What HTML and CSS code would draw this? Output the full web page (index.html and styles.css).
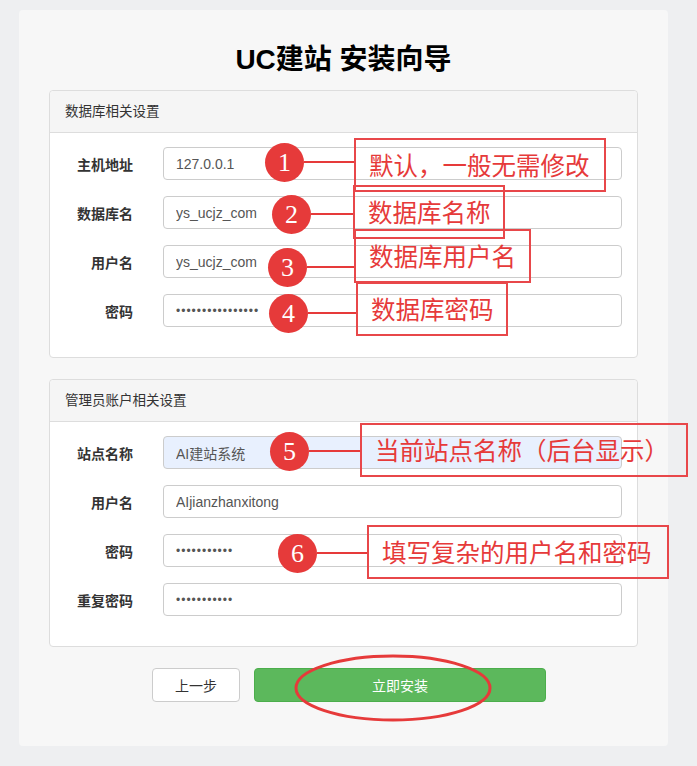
FILE: index.html
```html
<!DOCTYPE html>
<html lang="zh-CN">

<head>
    <meta charset="UTF-8">
    <meta name="viewport" content="width=device-width, initial-scale=1.0">
    <title>UC建站 安装向导</title>
    <link rel="stylesheet" href="styles.css">
</head>

<body>

    <div class="install-box">
        <h1>UC建站 安装向导</h1>

        <div class="panel">
            <div class="panel-heading">数据库相关设置</div>
            <div class="panel-body">
                <label>主机地址</label>
                <input type="text" value="127.0.0.1">
                <label>数据库名</label>
                <input type="text" value="ys_ucjz_com">
                <label>用户名</label>
                <input type="text" value="ys_ucjz_com">
                <label>密码</label>
                <input type="password" value="1234567890123456">
            </div>
        </div>

        <div class="panel">
            <div class="panel-heading">管理员账户相关设置</div>
            <div class="panel-body">
                <label>站点名称</label>
                <input type="text" class="autofill" value="AI建站系统">
                <label>用户名</label>
                <input type="text" value="AIjianzhanxitong">
                <label>密码</label>
                <input type="password" value="12345678901">
                <label>重复密码</label>
                <input type="password" value="12345678901">
            </div>
        </div>

        <div class="actions">
            <button class="btn btn-default">上一步</button>
            <button class="btn btn-success">立即安装</button>
        </div>
    </div>

    <!-- annotations drawn over the screenshot -->
    <div class="note n1">
        <span class="pin">1</span><span class="line"></span>
        <div class="tip">默认，一般无需修改</div>
    </div>
    <div class="note n2">
        <span class="pin">2</span><span class="line"></span>
        <div class="tip">数据库名称</div>
    </div>
    <div class="note n3">
        <span class="pin">3</span><span class="line"></span>
        <div class="tip">数据库用户名</div>
    </div>
    <div class="note n4">
        <span class="pin">4</span><span class="line"></span>
        <div class="tip">数据库密码</div>
    </div>
    <div class="note n5">
        <span class="pin">5</span><span class="line"></span>
        <div class="tip">当前站点名称（后台显示）</div>
    </div>
    <div class="note n6">
        <span class="pin">6</span><span class="line"></span>
        <div class="tip">填写复杂的用户名和密码</div>
    </div>

    <svg class="ring" width="204" height="72" viewBox="0 0 204 72">
        <ellipse cx="102" cy="36" rx="97" ry="32" fill="none" stroke="#e63a3a" stroke-width="3" />
    </svg>

</body>

</html>
```

FILE: styles.css
```css
body {
    margin: 0;
    background-color: #eeeff1;
    font-family: "Liberation Sans", Arial, "Noto Sans CJK SC", sans-serif;
    color: #333;
    height: 766px;
    overflow: hidden;
}

.install-box {
    width: 589px;
    margin: 10px 0 0 19px;
    padding: 30px 30px 44px;
    background: #f7f7f7;
    border-radius: 4px;
}

.install-box h1 {
    margin: 0 0 10px;
    font-size: 28px;
    line-height: 40px;
    text-align: center;
    color: #000;
}

.panel {
    background: #fff;
    border: 1px solid #ddd;
    border-radius: 4px;
    margin-bottom: 21px;
}

.panel-heading {
    height: 41px;
    line-height: 41px;
    padding: 0 15px;
    font-size: 13.5px;
    color: #333;
    background: #f5f5f5;
    border-bottom: 1px solid #ddd;
    border-radius: 4px 4px 0 0;
}

.panel-body {
    display: grid;
    grid-template-columns: 68px 1fr;
    column-gap: 30px;
    row-gap: 16px;
    align-items: center;
    padding: 14px 15px 30px;
}

.panel-body label {
    font-size: 14px;
    font-weight: bold;
    text-align: right;
    color: #333;
}

.panel-body input {
    box-sizing: border-box;
    height: 33px;
    padding: 0 12px;
    font-family: "Liberation Sans", Arial, "Noto Sans CJK SC", sans-serif;
    font-size: 14px;
    color: #555;
    background: #fff;
    border: 1px solid #ccc;
    border-radius: 4px;
    outline: none;
}

.panel-body input[type="password"] {
    font-size: 12px;
    letter-spacing: 1px;
}

.panel-body input.autofill {
    background: #e8f0fe;
}

.actions {
    display: flex;
    gap: 14px;
    padding-left: 103px;
}

.btn {
    height: 34px;
    font-family: "Liberation Sans", Arial, "Noto Sans CJK SC", sans-serif;
    font-size: 14px;
    border-radius: 4px;
    cursor: pointer;
}

.btn-default {
    width: 88px;
    background: #fff;
    border: 1px solid #ccc;
    color: #333;
}

.btn-success {
    width: 292px;
    background: #5cb85c;
    border: 1px solid #4cae4c;
    color: #fff;
}

/* annotations */
.note {
    position: absolute;
    display: flex;
    align-items: center;
}

.pin {
    position: relative;
    width: 39px;
    height: 39px;
    border-radius: 50%;
    background: #e63a3a;
    color: #fff;
    font-family: "Liberation Serif", "Times New Roman", serif;
    font-size: 26px;
    line-height: 39px;
    text-align: center;
    flex-shrink: 0;
}

.line {
    position: relative;
    height: 2px;
    background: #e63a3a;
    flex-shrink: 0;
}

.tip {
    box-sizing: border-box;
    height: 54px;
    line-height: 50px;
    padding-left: 13px;
    border: 2px solid #e8474a;
    font-family: "Noto Sans CJK SC", sans-serif;
    font-size: 24.5px;
    color: #e63a3a;
    white-space: nowrap;
}

.n1 { left: 265px; top: 138px; }
.n1 .pin, .n1 .line { top: -3px; }
.n1 .line { width: 50px; }
.n1 .tip { width: 252px; }

.n2 { left: 272px; top: 185px; }
.n2 .pin, .n2 .line { top: 2px; }
.n2 .line { width: 42px; }
.n2 .tip { width: 152px; }

.n3 { left: 268px; top: 229px; }
.n3 .pin, .n3 .line { top: 11px; }
.n3 .line { width: 47px; }
.n3 .tip { width: 177px; }

.n4 { left: 269px; top: 282px; }
.n4 .pin, .n4 .line { top: 4px; }
.n4 .line { width: 48px; }
.n4 .tip { width: 152px; }

.n5 { left: 270px; top: 423px; }
.n5 .pin, .n5 .line { top: 1px; }
.n5 .line { width: 51px; }
.n5 .tip { width: 328px; }

.n6 { left: 278px; top: 525px; }
.n6 .pin, .n6 .line { top: 1px; }
.n6 .line { width: 50px; }
.n6 .tip { width: 302px; }

.ring {
    position: absolute;
    left: 291px;
    top: 652px;
}
```
